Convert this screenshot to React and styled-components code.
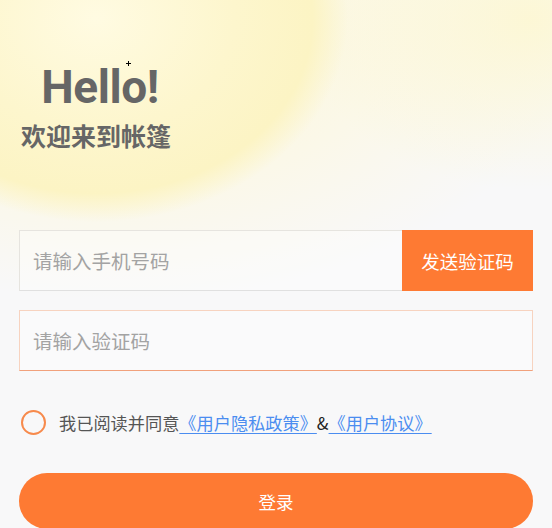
import React from 'react';
import styled, { createGlobalStyle } from 'styled-components';

const GlobalStyle = createGlobalStyle`
  html, body {
    margin: 0;
    padding: 0;
    background: #f8f8f9;
  }
  * { box-sizing: border-box; }
`;

const Page = styled.div`
  position: relative;
  width: 552px;
  height: 528px;
  overflow: hidden;
  font-family: Roboto, "Noto Sans CJK SC", sans-serif;
  background:
    radial-gradient(ellipse 252px 204px at 96px 18px, #fffbe2 0%, #fdf6cd 55%, #fcf4c4 86%, rgba(252, 244, 196, 0) 100%),
    radial-gradient(ellipse 230px 170px at 530px 20px, rgba(253, 247, 208, 0.85) 0%, rgba(253, 247, 208, 0) 100%),
    radial-gradient(ellipse 460px 270px at 120px 30px, rgba(253, 246, 210, 0.95) 0%, rgba(253, 248, 222, 0.6) 60%, rgba(248, 248, 249, 0) 100%),
    #f8f8f9;
  padding: 0 19px;
`;

const Cursor = styled.span`
  position: absolute;
  left: 126px;
  top: 61px;
  width: 5px;
  height: 5px;
  background:
    linear-gradient(#000, #000) center / 5px 1px no-repeat,
    linear-gradient(#000, #000) center / 1px 5px no-repeat;
`;

const Header = styled.div`
  display: inline-flex;
  flex-direction: column;
  align-items: center;
  margin: 60px 0 0 2px;
  height: 170px;
  color: #666666;
`;

const Title = styled.h1`
  margin: 0 0 0 8px;
  font-family: Roboto, sans-serif;
  font-size: 46px;
  font-weight: 700;
  line-height: 54px;
  letter-spacing: -0.4px;
`;

const Subtitle = styled.h2`
  margin: 6px 0 0;
  font-family: "Noto Sans CJK SC", sans-serif;
  font-size: 25px;
  font-weight: 700;
  line-height: 30px;
`;

const Form = styled.div`
  display: flex;
  flex-direction: column;
  gap: 19px;
`;

const Field = styled.div`
  display: flex;
  height: 61px;
  border: 1px solid ${(p) => (p.$active ? '#f7d3c0' : '#e6e4df')};
  border-bottom-color: ${(p) => (p.$active ? '#f1a17c' : '#e0e0e0')};
  background: rgba(255, 255, 255, 0.3);
`;

const Input = styled.input`
  flex: 1;
  min-width: 0;
  border: none;
  outline: none;
  background: transparent;
  padding: 0 13px;
  font-family: "Noto Sans CJK SC", sans-serif;
  font-size: 19.5px;
  color: #333;
  &::placeholder { color: #a3a3a3; }
`;

const SendButton = styled.button`
  width: 131px;
  margin: -1px -1px -1px 0;
  border: none;
  background: #fe7a33;
  color: #fff;
  font-family: "Noto Sans CJK SC", sans-serif;
  font-size: 18.5px;
`;

const Agree = styled.div`
  display: flex;
  align-items: center;
  gap: 13px;
  margin-top: 39px;
  padding-left: 2px;
  font-family: "Noto Sans CJK SC", sans-serif;
  font-size: 17.2px;
  color: #555;
`;

const Radio = styled.span`
  width: 25px;
  height: 25px;
  border-radius: 50%;
  border: 2.5px solid #f78a4c;
  flex-shrink: 0;
`;

const Link = styled.a`
  color: #4b8df0;
  text-decoration: underline;
  text-underline-offset: 3px;
  text-decoration-thickness: 1px;
`;

const Amp = styled.span`
  color: #222;
`;

const LoginButton = styled.button`
  width: 100%;
  height: 56px;
  margin-top: 38px;
  border: none;
  border-radius: 28px;
  background: #fe7a33;
  color: #fff;
  font-family: "Noto Sans CJK SC", sans-serif;
  font-size: 17.5px;
`;

export default function App() {
  return (
    <>
      <GlobalStyle />
      <Page>
        <Cursor />
        <Header>
          <Title>Hello!</Title>
          <Subtitle>欢迎来到帐篷</Subtitle>
        </Header>
        <Form>
          <Field>
            <Input placeholder="请输入手机号码" />
            <SendButton>发送验证码</SendButton>
          </Field>
          <Field $active>
            <Input placeholder="请输入验证码" />
          </Field>
        </Form>
        <Agree>
          <Radio />
          <span>
            我已阅读并同意<Link href="#">《用户隐私政策》</Link><Amp>&amp;</Amp><Link href="#">《用户协议》</Link>
          </span>
        </Agree>
        <LoginButton>登录</LoginButton>
      </Page>
    </>
  );
}
